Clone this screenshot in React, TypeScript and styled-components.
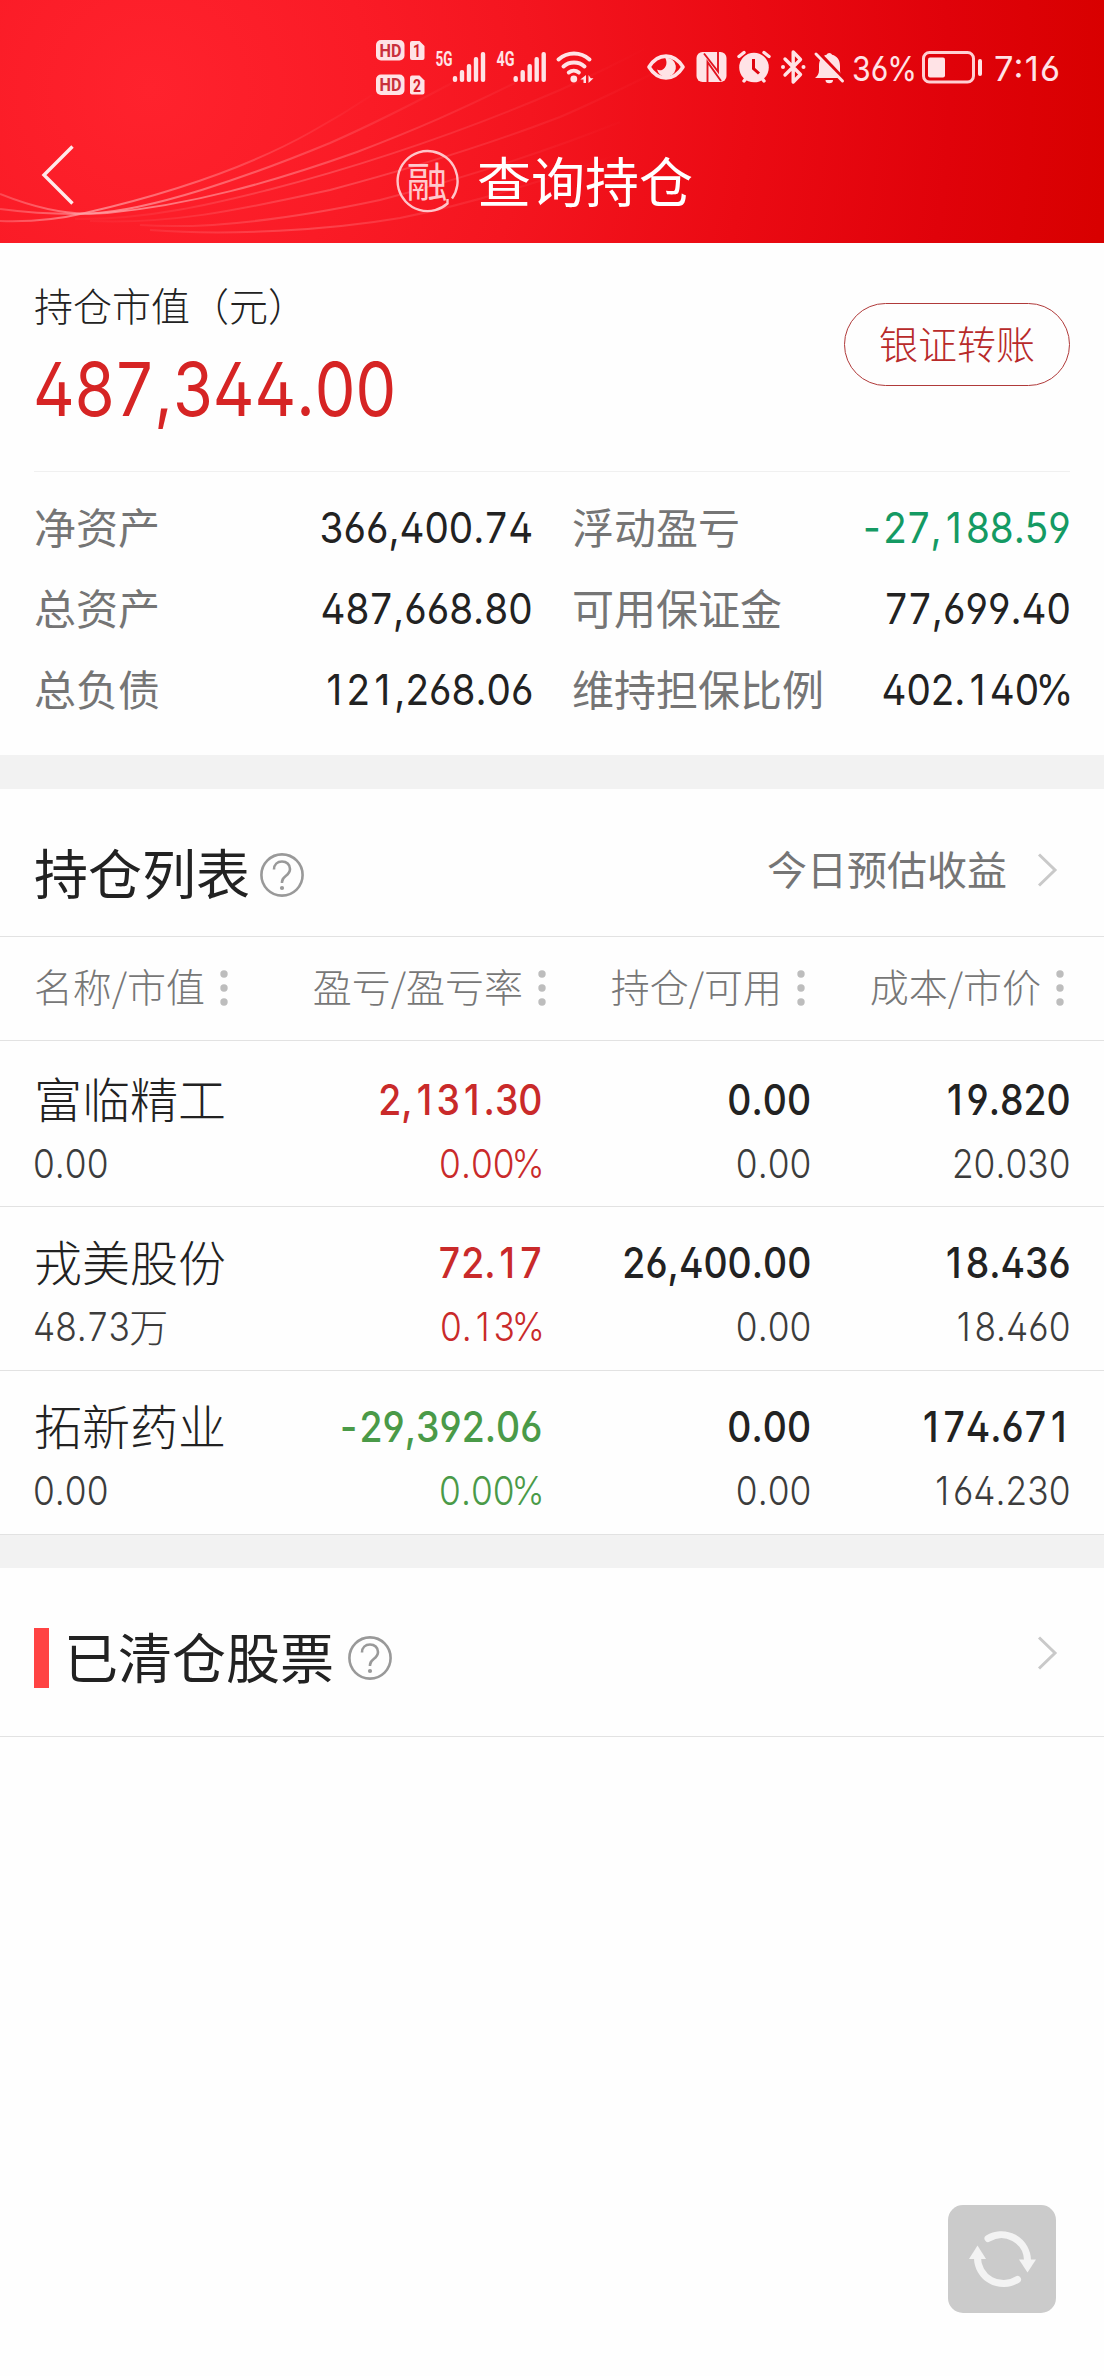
import React from "react";
import styled, { createGlobalStyle } from "styled-components";

const cjk = `"Noto Sans CJK SC", sans-serif`;
const latin = `Inter, "Noto Sans CJK SC", sans-serif`;

const GlobalStyle = createGlobalStyle`
  *, *::before, *::after { box-sizing: border-box; }
  body { margin: 0; background: #fefefe; font-family: ${cjk}; color: #222; }
`;

const Page = styled.main`
  position: relative;
  width: 1104px;
  height: 2376px;
  overflow: hidden;
  background: #fefefe;
`;

const Header = styled.header`
  position: relative;
  height: 243px;
  background: radial-gradient(circle at 150px 90px, #ff222d 0, #fa1b26 220px, #f4151f 380px, #eb0a13 600px, #e0020a 800px, #d80000 960px);
`;

const Waves = styled.svg`
  position: absolute;
  inset: 0;
`;

const StatusIcons = styled.svg`
  position: absolute;
  inset: 0;
`;

const NavBar = styled.div`
  position: relative;
  height: 243px;
  padding: 118px 50px 0 34px;
  display: grid;
  grid-template-columns: 1fr auto 1fr;
  align-items: center;
`;

const BackIcon = styled.svg`
  margin-bottom: 12px;
`;

const Title = styled.h1`
  margin: 0;
  display: flex;
  align-items: center;
  gap: 18px;
  font-size: 54px;
  font-weight: 400;
  line-height: 80px;
  color: #fff;
`;

const TitleText = styled.span`
  margin-bottom: 2px;
`;

const Badge = styled.span`
  position: relative;
  display: grid;
  place-items: center;
  width: 64px;
  height: 64px;
  padding-bottom: 3px;
  font-size: 41px;
  font-weight: 400;
  line-height: 41px;
  color: #ffc9cd;
`;

const BadgeRing = styled.svg`
  position: absolute;
  inset: 0;
`;

const Summary = styled.section`
  padding: 38px 34px 0;
  height: 512px;
`;

const SummaryTop = styled.div`
  display: flex;
  justify-content: space-between;
  height: 191px;
  border-bottom: 1px solid #f0f0f0;
`;

const Caption = styled.div`
  font-size: 39px;
  font-weight: 300;
  line-height: 47px;
  color: #222;
`;

/* Figures with open 4, 6 and 9, condensed toward the aligned edge. */
const Figures = styled.span<{ $scale: number; $from?: "left" | "right" }>`
  display: inline-block;
  margin: 0 -1px;
  font-family: ${latin};
  font-feature-settings: "cv02", "cv03", "cv04";
  font-kerning: none;
  white-space: nowrap;
  transform: scaleX(${(p) => p.$scale});
  transform-origin: ${(p) => p.$from ?? "right"} center;
`;

/* Evens out the advance of the glyphs that are narrower or wider than a figure. */
const Glyph = styled.span<{ $left: number; $right: number }>`
  margin: 0 ${(p) => p.$right}em 0 ${(p) => p.$left}em;
`;

const Amount = styled.div`
  font-family: ${latin};
  font-size: 74px;
  line-height: 80px;
  margin-top: 21px;
  color: #d62424;
`;

const TransferButton = styled.button`
  width: 226px;
  height: 83px;
  margin-top: 22px;
  padding: 0 0 5px;
  border: 1px solid #b03a3a;
  border-radius: 42px;
  background: transparent;
  font-family: ${cjk};
  font-size: 39px;
  font-weight: 300;
  color: #b82a2a;
`;

const Stats = styled.dl`
  margin: 15px 0 0;
  display: grid;
  grid-template-columns: 498px 498px;
  column-gap: 40px;
`;

const Stat = styled.div`
  display: flex;
  justify-content: space-between;
  height: 81px;
`;

const StatLabel = styled.dt`
  font-size: 42px;
  line-height: 77px;
  color: #757575;
`;

const StatValue = styled.dd<{ $color?: string }>`
  margin: 0;
  font-family: ${latin};
  font-size: 42px;
  line-height: 81px;
  color: ${(p) => p.$color ?? "#222"};
`;

const Band = styled.div<{ $edge?: boolean }>`
  height: 34px;
  background: #f2f2f2;
  border-top: ${(p) => (p.$edge ? "1px solid #e2e2e2" : "0")};
`;

const SectionHead = styled.div<{ $height: number; $drop: number }>`
  height: ${(p) => p.$height}px;
  padding: ${(p) => p.$drop}px 46px 0 34px;
  display: flex;
  align-items: center;
  border-bottom: 1px solid #e2e2e2;
`;

const SectionTitle = styled.h2`
  margin: 0 0 5px;
  font-size: 54px;
  font-weight: 400;
  line-height: 80px;
  color: #222;
`;

const Accent = styled.span`
  width: 15px;
  height: 60px;
  margin-right: 15px;
  background: #ff4343;
`;

const HelpIcon = styled.svg<{ $gap: number }>`
  margin-left: ${(p) => p.$gap}px;
`;

const More = styled.div`
  margin: 0 0 10px auto;
  display: flex;
  align-items: center;
  gap: 29px;
`;

const MoreText = styled.span`
  font-size: 40px;
  line-height: 56px;
  margin-bottom: 3px;
  color: #757575;
`;

const columns = "256px 251.5px 268.5px 260px";

const ColumnHeads = styled.div`
  display: flex;
  height: 104px;
  padding: 0 4px 2px 34px;
  align-items: center;
  border-bottom: 1px solid #e2e2e2;
`;

const ColumnHead = styled.div<{ $width: number }>`
  width: ${(p) => p.$width}px;
  display: flex;
  justify-content: flex-end;
  align-items: center;
  gap: 15px;
  color: #777;
`;

const ColumnLabel = styled.span`
  margin-bottom: 5px;
  font-size: 39px;
  font-weight: 300;
  line-height: 56px;
  white-space: nowrap;
`;

const Dots = styled.svg`
  flex: none;
`;

const Row = styled.div<{ $first?: boolean; $last?: boolean }>`
  display: grid;
  grid-template-columns: ${columns};
  height: ${(p) => (p.$first ? 166 : p.$last ? 163 : 164)}px;
  padding: ${(p) => (p.$first ? 27 : 24)}px 34px 0;
  border-bottom: ${(p) => (p.$last ? "0" : "1px solid #e2e2e2")};
`;

const Cell = styled.div<{ $left?: boolean; $color?: string }>`
  display: flex;
  flex-direction: column;
  align-items: ${(p) => (p.$left ? "flex-start" : "flex-end")};
  color: ${(p) => p.$color ?? "#222"};
`;

const Name = styled.span`
  font-size: 48px;
  font-weight: 300;
  line-height: 58px;
  margin-bottom: 6px;
`;

const Main = styled.span`
  font-family: ${latin};
  font-size: 42px;
  font-weight: 450;
  line-height: 64px;
`;

const Sub = styled.span<{ $muted?: boolean }>`
  display: flex;
  font-family: ${latin};
  font-size: 39.5px;
  font-weight: 300;
  line-height: 64px;
  color: ${(p) => (p.$muted ? "#3c3c3c" : "inherit")};
`;

const Unit = styled.span`
  margin-left: -11px;
  font-family: ${cjk};
  font-size: 39px;
  line-height: 60px;
`;

const Refresh = styled.button`
  position: absolute;
  left: 948px;
  top: 2205px;
  width: 108px;
  height: 108px;
  padding: 0;
  border: 0;
  border-radius: 15px;
  background: #cbcbcb;
`;

const spacing: Record<string, [number, number]> = {
  "1": [0.11, 0.11],
  "7": [0.025, 0.025],
  "-": [0, 0.06],
  "%": [-0.09, -0.07],
};

const Num = ({ value, scale, from }: { value: string; scale: number; from?: "left" | "right" }) => (
  <Figures $scale={scale} $from={from}>
    {value.split(/([17%-])/).map((part, i) =>
      spacing[part] ? (
        <Glyph key={i} $left={spacing[part][0]} $right={spacing[part][1]}>
          {part}
        </Glyph>
      ) : (
        part
      )
    )}
  </Figures>
);

const Help = ({ gap }: { gap: number }) => (
  <HelpIcon $gap={gap} width="46" height="46" viewBox="0 0 46 46" fill="none" stroke="#999" strokeWidth="2.6">
    <circle cx="23" cy="23" r="20.6" />
    <path d="M15 17.5C15 12.5 18.5 9.5 23 9.5s8 3 8 7.5c0 3.600-2 5.300-4.300 7C24.300 25.800 23 27 23 30v1" />
    <circle cx="23" cy="36" r="2.100" fill="#999" stroke="none" />
  </HelpIcon>
);

const Chevron = () => (
  <svg width="22" height="36" viewBox="0 0 22 36" fill="none" stroke="#c9c9c9" strokeWidth="3">
    <path d="M3 2.500 19 18 3 33.500" />
  </svg>
);

const SortDots = () => (
  <Dots width="8" height="38" viewBox="0 0 8 38" fill="#bdbdbd">
    <circle cx="4" cy="5" r="3.700" />
    <circle cx="4" cy="19" r="3.700" />
    <circle cx="4" cy="33" r="3.700" />
  </Dots>
);

const waves = [
  { d: "M0 221C30 222 60 219 85 213C150 198 240 172 311 132C340 116 360 103 372 95", end: 385 },
  { d: "M0 194C30 206 60 214 89 213.500C150 211 250 176 330 143C380 121 420 100 452 83", end: 480 },
  { d: "M0 209C30 213 70 215 107 213C190 205 270 183 357 152C420 128 460 110 515 83", end: 560 },
  { d: "M75 219C150 220 220 202 268 190C360 166 460 133 560 90C600 72 620 62 650 46", end: 650 },
  { d: "M90 221C170 224 230 212 330 190C420 166 500 140 560 117C600 100 640 80 680 60", end: 680 },
  { d: "M140 225C210 230 300 217 380 200C470 177 560 146 620 122", end: 640 },
  { d: "M150 230C230 236 330 230 400 218C480 202 560 176 640 146", end: 620 },
];

const bars = [6, 12, 18, 25, 30];

const Signal = ({ x }: { x: number }) => (
  <g>
    {bars.map((h, i) => (
      <rect key={i} x={x + i * 7} y={82 - h} width="4.400" height={h} rx="2" />
    ))}
  </g>
);

const Status = () => (
  <StatusIcons width="1104" height="110" viewBox="0 0 1104 110" fill="#ffe3e6" fontFamily="Roboto, sans-serif">
    {[
      { y: 40, n: "1" },
      { y: 74.5, n: "2" },
    ].map(({ y, n }) => (
      <g key={n}>
        <rect x="376" y={y} width="28.500" height="20.500" rx="5" />
        <path d={`M412 ${y + 1}h7.500l5 5v12a2 2 0 0 1-2 2h-10.500a2 2 0 0 1-2-2v-15a2 2 0 0 1 2-2z`} />
        <text x="379.500" y={y + 16.8} fontSize="18.500" fontWeight="700" fill="#c9303c" textLength="22" lengthAdjust="spacingAndGlyphs">HD</text>
        <text x="413" y={y + 17} fontSize="17.500" fontWeight="700" fill="#d11f2c" textLength="8" lengthAdjust="spacingAndGlyphs">{n}</text>
      </g>
    ))}
    <text x="435.500" y="65.500" fontSize="19.500" fontWeight="700" textLength="17" lengthAdjust="spacingAndGlyphs">5G</text>
    <Signal x={452.8} />
    <text x="496.500" y="65.500" fontSize="19.500" fontWeight="700" textLength="18" lengthAdjust="spacingAndGlyphs">4G</text>
    <Signal x={513.5} />
    <g fill="none" stroke="#ffe3e6" strokeWidth="4" strokeLinecap="round">
      <path d="M558.500 59.500c9-8 22-8 31 0" />
      <path d="M563.500 66.500c6-5.300 15-5.300 21 0" />
      <path d="M568.800 72.500c3-2.400 7-2.400 10 0" />
    </g>
    <circle cx="573.800" cy="79" r="3.400" />
    <path d="M586 75v8h-2.500v-3.500h-3.200zM588.500 75v8l5-4.800h-2.700z" />

    <path d="M649 67C658 52.500 674 52.500 683 67C674 81.500 658 81.500 649 67z" fill="none" stroke="#ffe3e6" strokeWidth="3.600" strokeLinejoin="round" />
    <path d="M665 57.800a9.600 9.600 0 1 1-8 11.800c1.500.8 3.800.9 5.400.1 4.200-2 5.300-7.900 2.600-11.900z" />

    <rect x="696.500" y="52" width="30" height="30" rx="6" />
    <path d="M704 53.500l14 18V52M707.500 82V62l13.500 19" fill="none" stroke="#e3131f" strokeWidth="1.900" />

    <circle cx="754" cy="67.500" r="14.800" />
    <path d="M739 56.500l5-4M769 56.500l-5-4M744 81l3-4M764 81l-3-4" stroke="#ffe3e6" strokeWidth="3.400" strokeLinecap="round" />
    <path d="M753.500 59v9.500l5.500 5" fill="none" stroke="#de0610" strokeWidth="3" />

    <path d="M785 59l15.500 15.500-7.300 7.500V52l7.300 7.500L785 75" fill="none" stroke="#ffe3e6" strokeWidth="3.400" strokeLinejoin="round" strokeLinecap="round" />
    <circle cx="783" cy="67" r="2" />
    <circle cx="803.500" cy="67" r="2" />

    <path d="M815 78c2.500-2 4-4 4-8v-4c0-6 3-10 7.500-11.200a3 3 0 0 1 5.600 0C837 56 840 60 840 66v4c0 3 .8 5 2 6.300V78zM825.500 80h7.500a3.700 3.200 0 0 1-7.500 0z" />
    <path d="M817.500 51.500L844 79.500" stroke="#df0711" strokeWidth="4" />
    <path d="M816 54L842.500 81" stroke="#ffe3e6" strokeWidth="3" strokeLinecap="round" />

    <g fontFamily="Inter, sans-serif" fontSize="34.500" style={{ fontFeatureSettings: '"cv03", "cv04"' }}>
      <text x="852" y="81.300" textLength="65" lengthAdjust="spacingAndGlyphs">36%</text>
      <text x="994" y="81.300" textLength="66" lengthAdjust="spacing">7:16</text>
    </g>
    <rect x="923.500" y="52.500" width="50" height="29.500" rx="6" fill="none" stroke="#ffd0d3" strokeWidth="3" />
    <rect x="928" y="57.500" width="17" height="20" rx="2" />
    <rect x="978" y="59" width="4" height="17" rx="2" />
  </StatusIcons>
);

const stats = [
  { label: "净资产", value: "366,400.74" },
  { label: "浮动盈亏", value: "-27,188.59", color: "#149a63" },
  { label: "总资产", value: "487,668.80" },
  { label: "可用保证金", value: "77,699.40" },
  { label: "总负债", value: "121,268.06" },
  { label: "维持担保比例", value: "402.140%" },
];

const heads = [
  { label: "名称/市值", width: 194 },
  { label: "盈亏/盈亏率", width: 318 },
  { label: "持仓/可用", width: 259 },
  { label: "成本/市价", width: 259 },
];

const red = "#c92a2a";
const green = "#4a9a48";

const holdings = [
  { name: "富临精工", value: "0.00", unit: "", gain: "2,131.30", rate: "0.00%", color: red, held: "0.00", free: "0.00", cost: "19.820", price: "20.030" },
  { name: "戎美股份", value: "48.73", unit: "万", gain: "72.17", rate: "0.13%", color: red, held: "26,400.00", free: "0.00", cost: "18.436", price: "18.460" },
  { name: "拓新药业", value: "0.00", unit: "", gain: "-29,392.06", rate: "0.00%", color: green, held: "0.00", free: "0.00", cost: "174.671", price: "164.230" },
];

const mainScale = 0.89;
const subScale = 0.895;

export default function App() {
  return (
    <Page>
      <GlobalStyle />
      <Header>
        <Waves width="1104" height="243" viewBox="0 0 1104 243" fill="none">
          <defs>
            {waves.map((w, i) => (
              <linearGradient key={i} id={`wave${i}`} gradientUnits="userSpaceOnUse" x1="0" y1="0" x2={w.end} y2="0">
                <stop offset="0" stopColor="#ff9aa0" stopOpacity={i < 3 ? 0.35 : 0} />
                <stop offset=".22" stopColor="#ffa6aa" stopOpacity={i < 3 ? 0.75 : 0.1} />
                <stop offset=".5" stopColor="#ff8a90" stopOpacity={i < 3 ? 0.6 : 0.38} />
                <stop offset="1" stopColor="#ff5a63" stopOpacity="0" />
              </linearGradient>
            ))}
          </defs>
          {waves.map((w, i) => (
            <path key={i} d={w.d} stroke={`url(#wave${i})`} strokeWidth="2" />
          ))}
        </Waves>
        <Status />
        <NavBar>
          <BackIcon width="48" height="64" viewBox="0 0 48 64" fill="none" stroke="#ffe9ea" strokeWidth="3.400">
            <path d="M38.500 3.500 10 32 38.500 60.500" />
          </BackIcon>
          <Title>
            <Badge>
              <BadgeRing width="64" height="64" viewBox="0 0 64 64" fill="none" stroke="#ffc5c9" strokeWidth="2.400">
                <path d="M57 49.500A30 30 0 1 0 52.500 54.500V50" />
              </BadgeRing>
              融
            </Badge>
            <TitleText>查询持仓</TitleText>
          </Title>
        </NavBar>
      </Header>

      <Summary>
        <SummaryTop>
          <div>
            <Caption>持仓市值（元）</Caption>
            <Amount>
              <Num value="487,344.00" scale={0.872} from="left" />
            </Amount>
          </div>
          <TransferButton>银证转账</TransferButton>
        </SummaryTop>
        <Stats>
          {stats.map((s) => (
            <Stat key={s.label}>
              <StatLabel>{s.label}</StatLabel>
              <StatValue $color={s.color}>
                <Num value={s.value} scale={0.92} />
              </StatValue>
            </Stat>
          ))}
        </Stats>
      </Summary>
      <Band />

      <SectionHead $height={148} $drop={24}>
        <SectionTitle>持仓列表</SectionTitle>
        <Help gap={9} />
        <More>
          <MoreText>今日预估收益</MoreText>
          <Chevron />
        </More>
      </SectionHead>
      <ColumnHeads>
        {heads.map((h) => (
          <ColumnHead key={h.label} $width={h.width}>
            <ColumnLabel>{h.label}</ColumnLabel>
            <SortDots />
          </ColumnHead>
        ))}
      </ColumnHeads>
      {holdings.map((h, i) => (
        <Row key={h.name} $first={i === 0} $last={i === 2}>
          <Cell $left>
            <Name>{h.name}</Name>
            <Sub $muted>
              <Num value={h.value} scale={subScale} from="left" />
              {h.unit && <Unit>{h.unit}</Unit>}
            </Sub>
          </Cell>
          <Cell $color={h.color}>
            <Main><Num value={h.gain} scale={mainScale} /></Main>
            <Sub><Num value={h.rate} scale={subScale} /></Sub>
          </Cell>
          <Cell>
            <Main><Num value={h.held} scale={mainScale} /></Main>
            <Sub $muted><Num value={h.free} scale={subScale} /></Sub>
          </Cell>
          <Cell>
            <Main><Num value={h.cost} scale={mainScale} /></Main>
            <Sub $muted><Num value={h.price} scale={subScale} /></Sub>
          </Cell>
        </Row>
      ))}
      <Band $edge />

      <SectionHead $height={169} $drop={12}>
        <Accent />
        <SectionTitle>已清仓股票</SectionTitle>
        <Help gap={13} />
        <More>
          <Chevron />
        </More>
      </SectionHead>

      <Refresh aria-label="刷新">
        <svg width="108" height="108" viewBox="0 0 108 108" fill="none" stroke="#f3f3f3" strokeWidth="7" strokeLinecap="round">
          <path d="M40 33.500A26 26 0 0 1 79.500 55" />
          <path d="M69.500 74.500A26 26 0 0 1 29.500 52" />
          <path d="M71 54.500h17L79.500 67.500z" fill="#f3f3f3" stroke="none" />
          <path d="M21 54h17L29.500 40.500z" fill="#f3f3f3" stroke="none" />
        </svg>
      </Refresh>
    </Page>
  );
}
